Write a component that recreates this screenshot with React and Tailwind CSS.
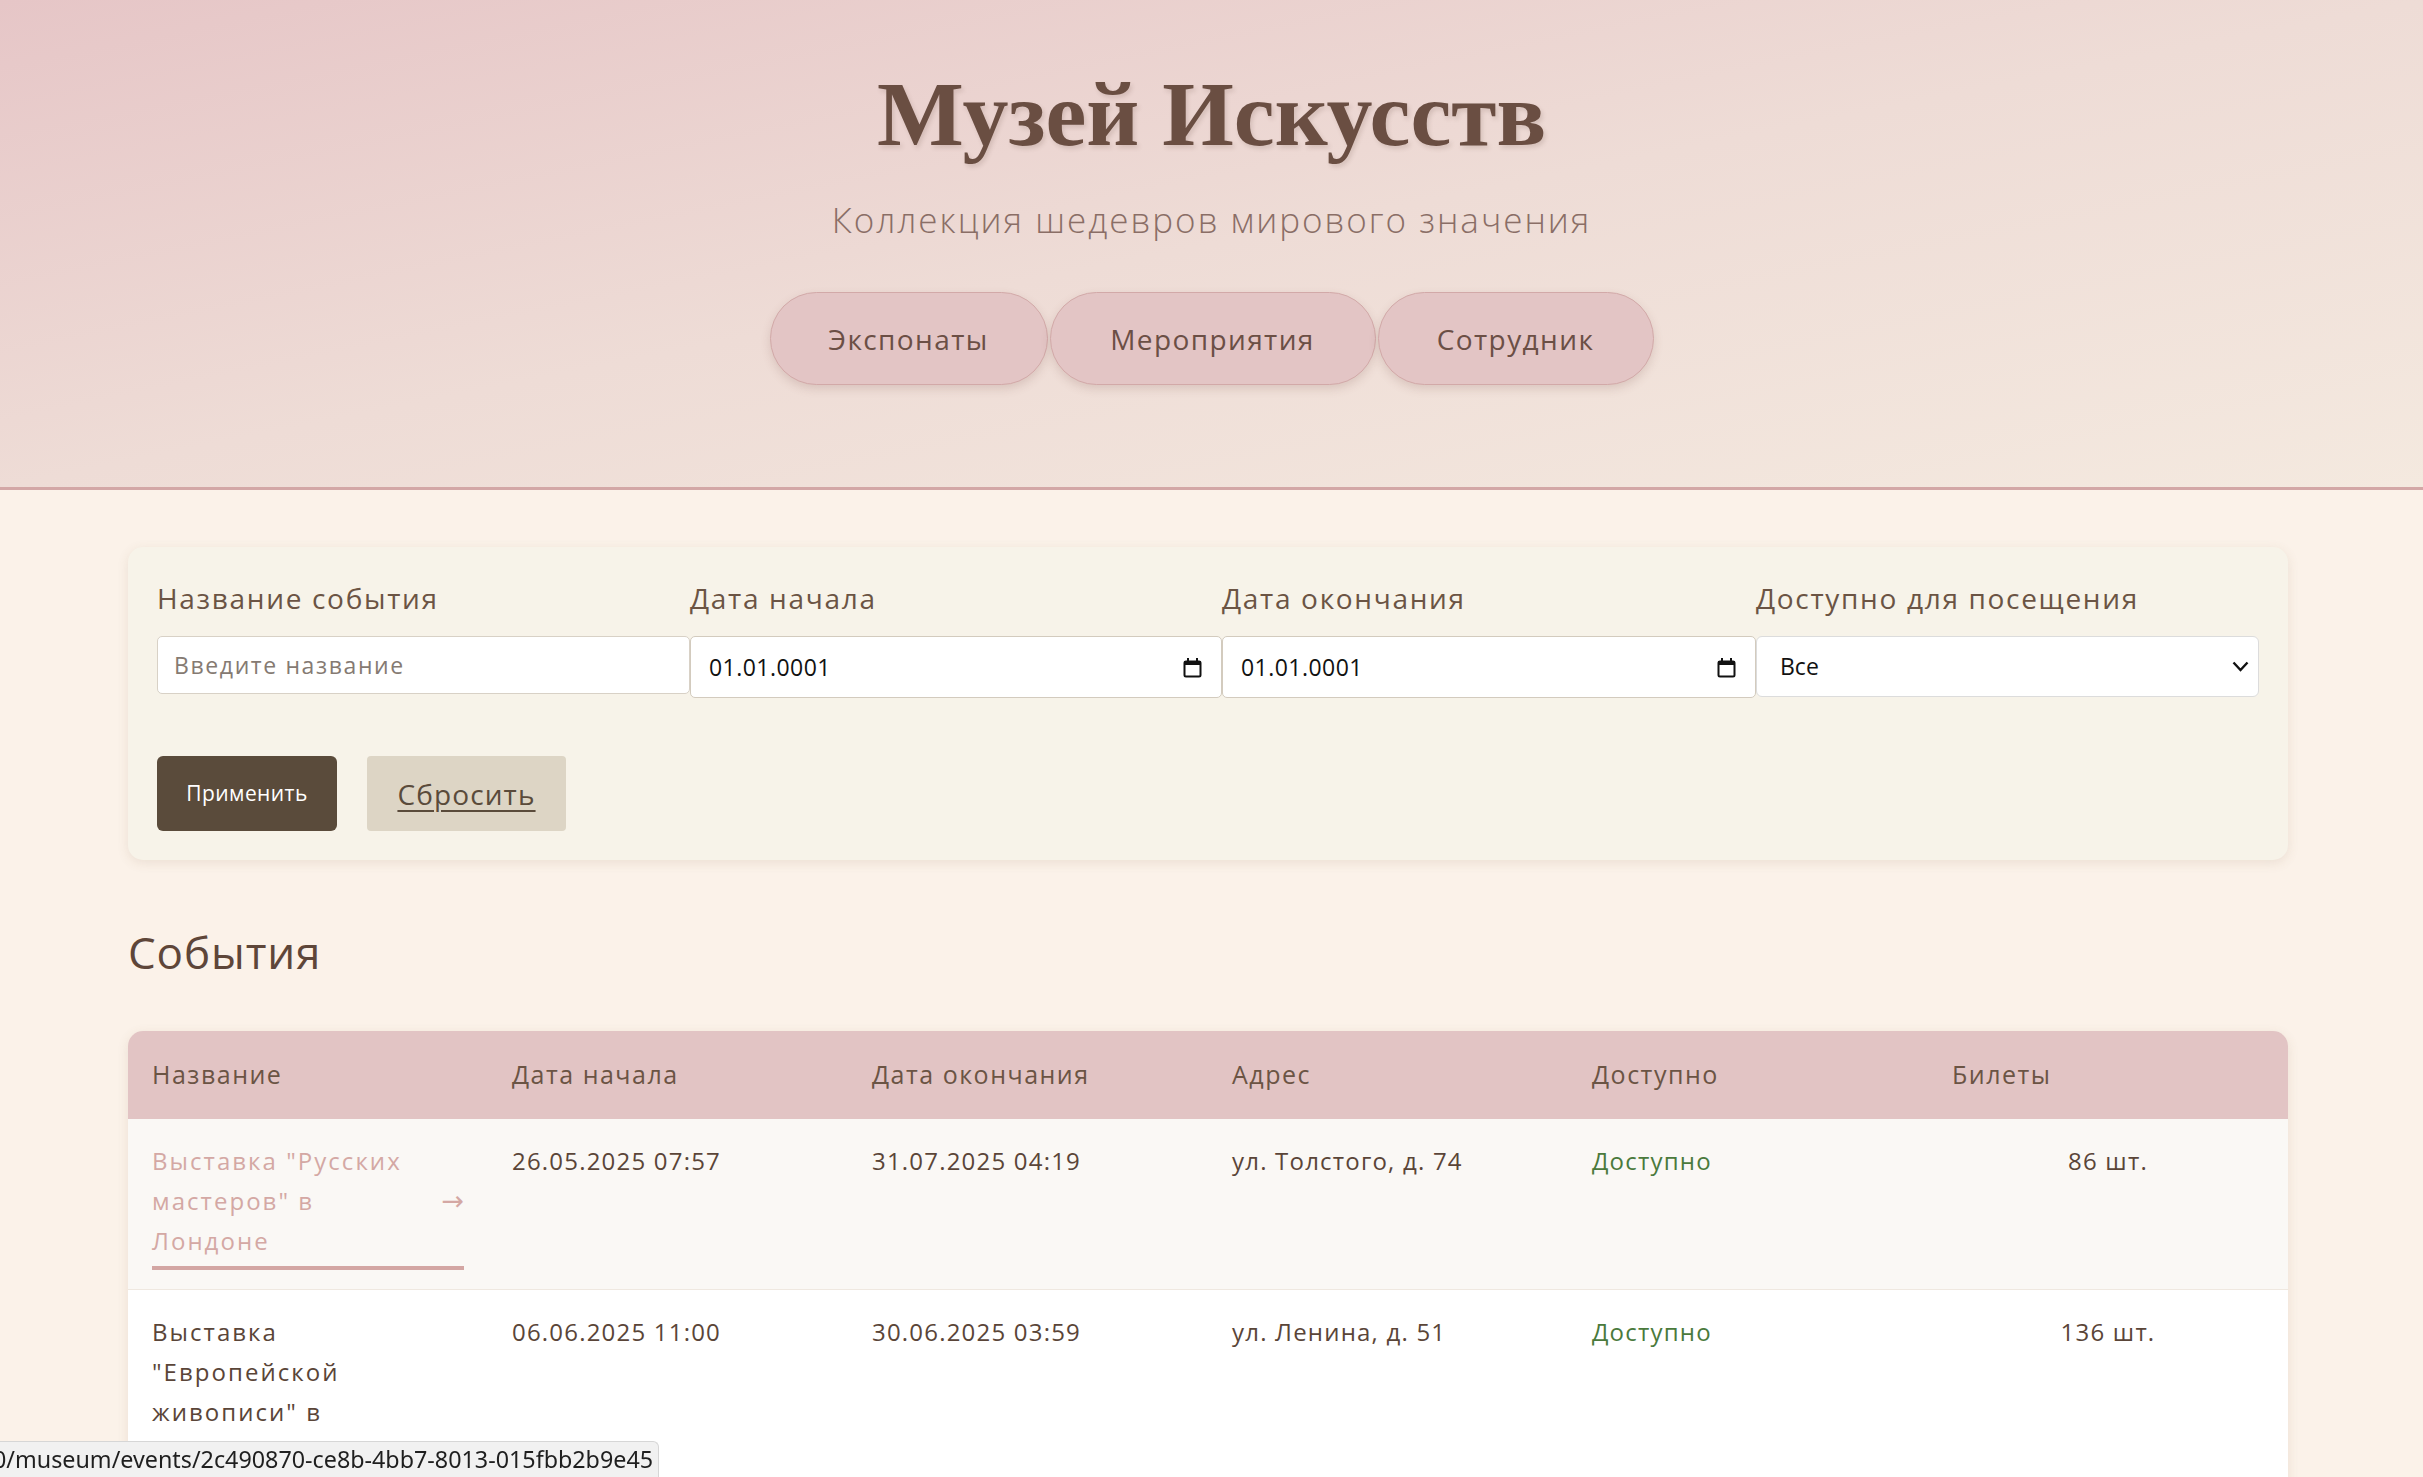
import React from 'react';

const events = [
  {
    name: ['Выставка "Русских', 'мастеров" в', 'Лондоне'],
    start: '26.05.2025 07:57',
    end: '31.07.2025 04:19',
    address: 'ул. Толстого, д. 74',
    available: true,
    tickets: 86,
    hovered: true,
  },
  {
    name: ['Выставка', '"Европейской', 'живописи" в'],
    start: '06.06.2025 11:00',
    end: '30.06.2025 03:59',
    address: 'ул. Ленина, д. 51',
    available: true,
    tickets: 136,
    hovered: false,
  },
];

const CalendarIcon = () => (
  <svg width="19" height="21" viewBox="0 0 19 21" className="shrink-0">
    <rect x="1.5" y="4.5" width="16" height="15" rx="1.5" fill="none" stroke="#111" strokeWidth="2" />
    <rect x="1" y="4" width="17" height="4" fill="#111" />
    <rect x="4" y="1" width="2" height="4" fill="#111" />
    <rect x="13" y="1" width="2" height="4" fill="#111" />
  </svg>
);

const FieldLabel = ({ children }) => (
  <span className="text-[28px] leading-[40px] tracking-[0.06em] text-[#6b5444] mb-[18px] whitespace-nowrap">{children}</span>
);

const DateField = ({ label, value, width }) => (
  <div className={`flex flex-col ${width}`}>
    <FieldLabel>{label}</FieldLabel>
    <div className="h-[62px] flex items-center justify-between pl-[18px] pr-[19px] bg-white border border-[#d3cbbe] rounded-[5px]">
      <span className="text-[23px] text-[#111] tracking-[0.02em]">{value}</span>
      <CalendarIcon />
    </div>
  </div>
);

const App = () => {
  return (
    <div className="min-h-screen bg-[#fbf2e9] font-['Open_Sans',sans-serif] overflow-hidden">
      {/* Header */}
      <header className="h-[490px] border-b-[3px] border-[#d3a7a6] bg-linear-to-br from-[#e6c6c7] via-[#eedcd6] to-[#f4e9df] flex flex-col items-center">
        <h1 className="mt-[68px] text-[92px] leading-none font-bold text-[#6a4e42] font-['Liberation_Serif',serif] [text-shadow:2px_3px_4px_rgba(106,78,66,0.18)]">
          Музей Искусств
        </h1>
        <p className="mt-[42px] text-[35px] leading-none font-light tracking-[0.057em] text-[#8a6e66]">
          Коллекция шедевров мирового значения
        </p>
        <nav className="mt-[55px] flex gap-[2px]">
          {[
            ['Экспонаты', 'w-[278px]'],
            ['Мероприятия', 'w-[326px]'],
            ['Сотрудник', 'w-[276px]'],
          ].map(([item, w]) => (
            <a
              key={item}
              href="#"
              className={`${w} h-[93px] flex items-center justify-center rounded-full border border-[#d2a9a8] bg-[#e3c5c5] text-[28px] tracking-[0.05em] text-[#6b4f45] shadow-[0_4px_10px_rgba(120,80,70,0.18)]`}
            >
              {item}
            </a>
          ))}
        </nav>
      </header>

      <main className="ml-[128px] w-[2160px]">
        {/* Filters */}
        <section className="mt-[57px] rounded-[15px] bg-[#f7f3e9] shadow-[0_3px_12px_rgba(120,90,60,0.12)] pt-[31px] px-[29px] pb-[29px]">
          <div className="flex items-start">
            <div className="flex flex-col w-[533px]">
              <FieldLabel>Название события</FieldLabel>
              <input
                type="text"
                placeholder="Введите название"
                className="h-[58px] pl-[16px] bg-white border border-[#d8d1c6] rounded-[5px] text-[23px] tracking-[0.07em] placeholder:text-[#857a72] outline-none"
              />
            </div>
            <DateField label="Дата начала" value="01.01.0001" width="w-[532px]" />
            <DateField label="Дата окончания" value="01.01.0001" width="w-[534px]" />
            <div className="flex flex-col flex-1">
              <FieldLabel>Доступно для посещения</FieldLabel>
              <div className="h-[61px] flex items-center justify-between pl-[23px] pr-[9px] bg-white border border-[#dcdcdc] rounded-[6px]">
                <span className="text-[23px] text-[#111]">Все</span>
                <svg width="17" height="11" viewBox="0 0 17 11">
                  <polyline points="1.5,1.5 8.5,9 15.5,1.5" fill="none" stroke="#111" strokeWidth="2.4" />
                </svg>
              </div>
            </div>
          </div>
          <div className="mt-[58px] flex gap-[30px]">
            <button className="w-[180px] h-[75px] rounded-[6px] bg-[#5a4b3b] text-white text-[21px] tracking-[0.02em] font-medium">
              Применить
            </button>
            <a
              href="#"
              className="w-[199px] h-[75px] rounded-[4px] bg-[#ddd5c5] flex items-center justify-center text-[28px] tracking-[0.04em] text-[#5a4b3b] underline underline-offset-[5px] decoration-[2px]"
            >
              Сбросить
            </a>
          </div>
        </section>

        {/* Events */}
        <h2 className="mt-[66px] text-[44px] leading-[1.2] font-medium tracking-[0.02em] text-[#5e4639]">События</h2>

        <div className="mt-[52px] rounded-t-[15px] overflow-hidden shadow-[0_3px_12px_rgba(120,90,60,0.12)]">
          <table className="w-full table-fixed border-collapse">
            <thead>
              <tr className="bg-[#e2c4c4] h-[88px]">
                {['Название', 'Дата начала', 'Дата окончания', 'Адрес', 'Доступно', 'Билеты'].map((h) => (
                  <th key={h} className="px-[24px] text-left font-normal text-[25px] tracking-[0.06em] text-[#6b5444]">
                    {h}
                  </th>
                ))}
              </tr>
            </thead>
            <tbody className="text-[24px] leading-[40px] tracking-[0.05em] text-[#5a4538]">
              {events.map((ev, i) => (
                <tr key={ev.start} className={`${ev.hovered ? 'bg-[#faf8f5]' : 'bg-white'} border-b border-[#efe8e0]`}>
                  <td className={`align-top px-[24px] pt-[22px] ${i === events.length - 1 ? 'pb-[80px]' : 'pb-[19px]'}`}>
                    <a
                      href="#"
                      className={`flex items-center justify-between pb-[5px] border-b-4 tracking-[0.085em] ${
                        ev.hovered ? 'border-[#d3a6a3] text-[#d4a8a4]' : 'border-transparent text-[#5a4538]'
                      }`}
                    >
                      <span className="whitespace-nowrap">
                        {ev.name.map((line) => (
                          <span key={line} className="block">{line}</span>
                        ))}
                      </span>
                      <span
                        className={`font-['DejaVu_Sans',sans-serif] text-[27px] tracking-normal ${
                          ev.hovered ? 'text-[#d4a8a4]' : 'opacity-0'
                        }`}
                      >
                        →
                      </span>
                    </a>
                  </td>
                  <td className="align-top px-[24px] pt-[22px]">{ev.start}</td>
                  <td className="align-top px-[24px] pt-[22px]">{ev.end}</td>
                  <td className="align-top px-[24px] pt-[22px]">{ev.address}</td>
                  <td className="align-top px-[24px] pt-[22px] text-[#4a7a3c]">{ev.available ? 'Доступно' : 'Недоступно'}</td>
                  <td className="align-top px-[24px] pt-[22px] text-center">{ev.tickets} шт.</td>
                </tr>
              ))}
            </tbody>
          </table>
        </div>
      </main>

      {/* Browser link status bubble */}
      <div className="fixed bottom-0 left-0 h-[36px] pr-[5px] flex items-center bg-[#f1f1f1] border-t border-r border-[#d6d6d6] rounded-tr-[6px] overflow-hidden">
        <span className="-ml-[7px] text-[23.3px] text-[#1f1f1f] font-['Noto_Sans',sans-serif] whitespace-nowrap">
          0/museum/events/2c490870-ce8b-4bb7-8013-015fbb2b9e45
        </span>
      </div>
    </div>
  );
};

export default App;
